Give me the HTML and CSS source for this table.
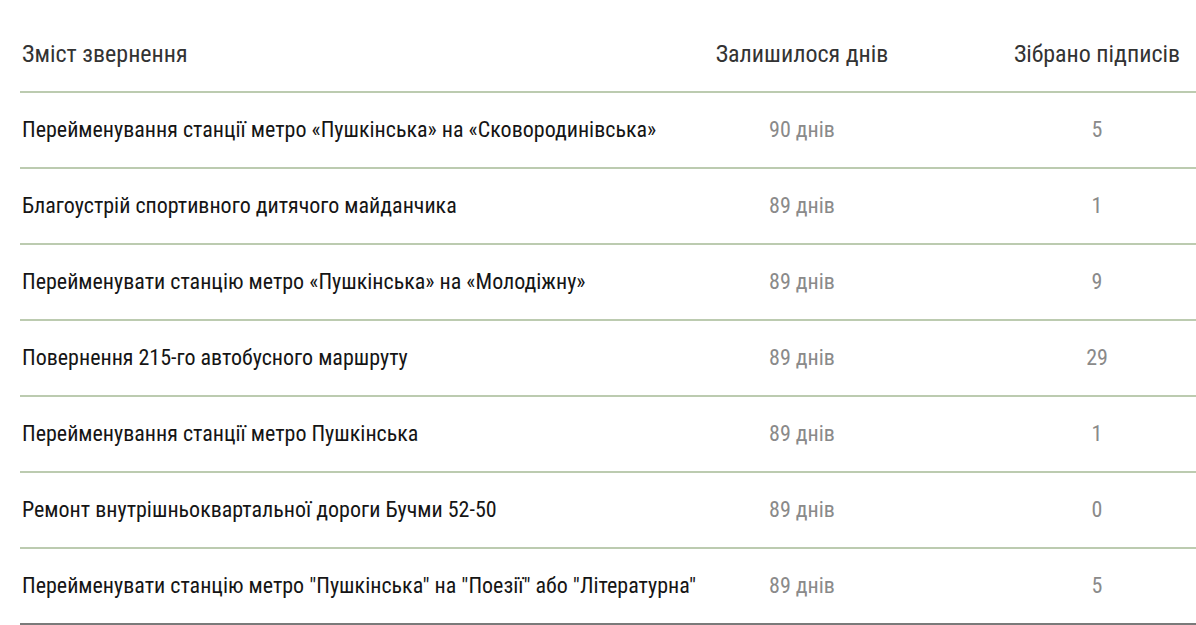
FILE: index.html
```html
<!DOCTYPE html>
<html lang="uk">
<head>
<meta charset="utf-8">
<link rel="stylesheet" href="styles.css">
</head>
<body>
<div class="table">
  <div class="row head">
    <div class="c1">Зміст звернення</div>
    <div class="c2">Залишилося днів</div>
    <div class="c3">Зібрано підписів</div>
  </div>
  <div class="row">
    <div class="c1">Перейменування станції метро «Пушкінська» на «Сковородинівська»</div>
    <div class="c2 muted">90 днів</div>
    <div class="c3 muted">5</div>
  </div>
  <div class="row">
    <div class="c1">Благоустрій спортивного дитячого майданчика</div>
    <div class="c2 muted">89 днів</div>
    <div class="c3 muted">1</div>
  </div>
  <div class="row">
    <div class="c1">Перейменувати станцію метро «Пушкінська» на «Молодіжну»</div>
    <div class="c2 muted">89 днів</div>
    <div class="c3 muted">9</div>
  </div>
  <div class="row">
    <div class="c1">Повернення 215-го автобусного маршруту</div>
    <div class="c2 muted">89 днів</div>
    <div class="c3 muted">29</div>
  </div>
  <div class="row">
    <div class="c1">Перейменування станції метро Пушкінська</div>
    <div class="c2 muted">89 днів</div>
    <div class="c3 muted">1</div>
  </div>
  <div class="row">
    <div class="c1">Ремонт внутрішньоквартальної дороги Бучми 52-50</div>
    <div class="c2 muted">89 днів</div>
    <div class="c3 muted">0</div>
  </div>
  <div class="row last">
    <div class="c1">Перейменувати станцію метро "Пушкінська" на "Поезії" або "Літературна"</div>
    <div class="c2 muted">89 днів</div>
    <div class="c3 muted">5</div>
  </div>
</div>
</body>
</html>
```
FILE: styles.css
```css
html, body {
  margin: 0;
  padding: 0;
  background: #fff;
}
body {
  font-family: "Roboto", "DejaVu Sans Condensed", sans-serif;
  font-stretch: 75%;
  height: 625px;
  overflow: hidden;
}
.table {
  margin-left: 20px;
  width: 1176px;
  border-bottom: 2px solid #7a7a7a;
}
.row {
  display: grid;
  grid-template-columns: minmax(0, 1fr) 198px 198px;
  column-gap: 97px;
  align-items: center;
  height: 74px;
  border-bottom: 2px solid #bccbb0;
  font-size: 22px;
  line-height: 24px;
  color: #151515;
}
.row.last {
  border-bottom: none;
}
.row.head {
  height: auto;
  padding: 42px 0 25px;
  font-size: 24px;
  color: #333;
}
.c1 {
  padding-left: 2px;
  white-space: nowrap;
}
.c2, .c3 {
  text-align: center;
  white-space: nowrap;
}
.muted {
  color: #8a8a8a;
}
```
